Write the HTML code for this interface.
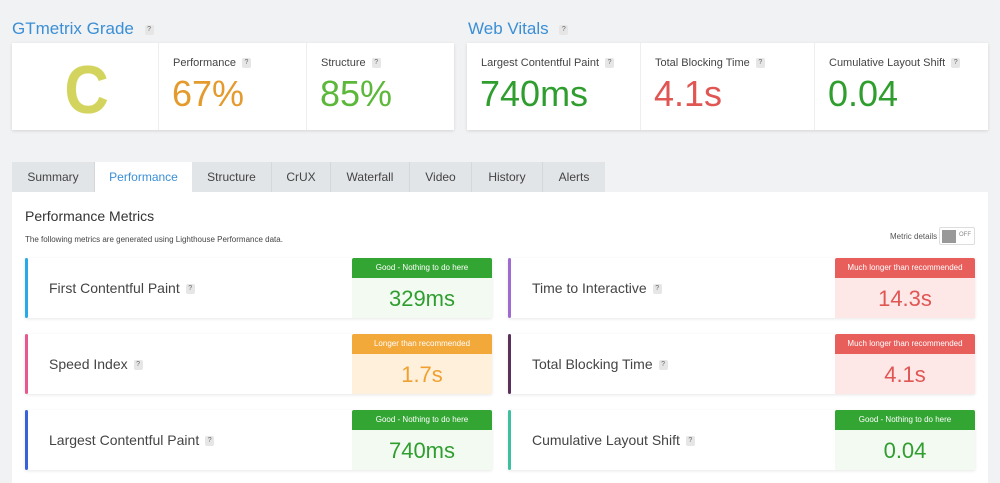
<!DOCTYPE html>
<html><head><style>
*{box-sizing:border-box;margin:0;padding:0}
body{width:1000px;height:483px;background:#f1f2f3;font-family:"Liberation Sans",sans-serif;position:relative;overflow:hidden;color:#333}
.abs{position:absolute}
h2{position:absolute;font-weight:normal;font-size:17px;color:#3a8fd6;top:19px}
.q{display:inline-block;width:9px;height:10px;background:#e6e6e6;color:#666;font-size:7px;line-height:10px;text-align:center;border-radius:2px;vertical-align:middle;margin-left:6px}
.card{position:absolute;background:#fff;box-shadow:0 1px 3px rgba(0,0,0,.12);top:43px;height:87px}
.cell{position:absolute;top:0;height:87px;border-right:1px solid #eee}
.cell .l{position:absolute;left:14px;top:14px;font-size:11px;color:#444}
.cell .v{position:absolute;left:13px;top:30px;font-size:36px}
.tab{position:absolute;top:162px;height:30px;background:#e2e5e8;border-right:1px solid #d5d8db;font-size:12px;color:#444;text-align:center;line-height:30px}
.panel{position:absolute;left:12px;top:192px;width:976px;height:291px;background:#fff}
.row{position:absolute;height:60px;background:#fff;box-shadow:0 1px 3px rgba(0,0,0,.1);border-radius:2px}
.row .bar{position:absolute;left:0;top:0;width:3px;height:60px;border-radius:2px}
.row .n{position:absolute;left:24px;top:22px;font-size:14px;color:#444}
.badge{position:absolute;right:0;top:0;width:140px;height:60px}
.badge .h{height:20px;color:#fff;font-size:8px;text-align:center;line-height:20px;border-radius:2px 2px 0 0}
.badge .bv{height:40px;text-align:center;font-size:22px;line-height:42px}
.g .h{background:#33a532}.g .bv{background:#f3faf2;color:#2f9e2f}
.o .h{background:#f3a83a}.o .bv{background:#fff0dc;color:#f0a030}
.r .h{background:#e85e5b}.r .bv{background:#fde8e7;color:#e05653}
</style></head><body>
<h2 style="left:12px">GTmetrix Grade <span class="q">?</span></h2>
<h2 style="left:468px">Web Vitals <span class="q">?</span></h2>
<div class="card" style="left:12px;width:442px">
 <div class="cell" style="left:0;width:147px"><div class="abs" style="left:50px;top:8px;font-size:68px;color:#d2d45e;font-weight:bold;transform:scaleX(.9);text-shadow:0 0 1px #e8e8a0">C</div></div>
 <div class="cell" style="left:147px;width:148px"><div class="l">Performance<span class="q">?</span></div><div class="v" style="color:#e49a2d">67%</div></div>
 <div class="cell" style="left:295px;width:147px;border:0"><div class="l">Structure<span class="q">?</span></div><div class="v" style="color:#5cb83a">85%</div></div>
</div>
<div class="card" style="left:467px;width:521px">
 <div class="cell" style="left:0;width:174px"><div class="l">Largest Contentful Paint<span class="q">?</span></div><div class="v" style="color:#2f9e2f">740ms</div></div>
 <div class="cell" style="left:174px;width:174px"><div class="l">Total Blocking Time<span class="q">?</span></div><div class="v" style="color:#e05653">4.1s</div></div>
 <div class="cell" style="left:348px;width:173px;border:0"><div class="l">Cumulative Layout Shift<span class="q">?</span></div><div class="v" style="color:#2f9e2f">0.04</div></div>
</div>
<div class="tab" style="left:12px;width:83px">Summary</div>
<div class="tab" style="left:95px;width:97px;background:#fff;color:#3a8fd6;border:0">Performance</div>
<div class="tab" style="left:192px;width:80px">Structure</div>
<div class="tab" style="left:272px;width:59px">CrUX</div>
<div class="tab" style="left:331px;width:79px">Waterfall</div>
<div class="tab" style="left:410px;width:62px">Video</div>
<div class="tab" style="left:472px;width:71px">History</div>
<div class="tab" style="left:543px;width:62px;border:0">Alerts</div>
<div class="panel"></div>
<div class="abs" style="left:25px;top:208px;font-size:14px;color:#333">Performance Metrics</div>
<div class="abs" style="left:25px;top:235px;font-size:8px;color:#444">The following metrics are generated using Lighthouse Performance data.</div>
<div class="abs" style="left:890px;top:232px;font-size:8px;color:#555">Metric details</div>
<div class="abs" style="left:939px;top:227px;width:36px;height:18px;border:1px solid #ddd;border-radius:2px;background:#fff"><div class="abs" style="left:2px;top:2px;width:14px;height:13px;background:#999"></div><div class="abs" style="left:19px;top:4px;font-size:6px;color:#888">OFF</div></div>

<div class="row" style="left:25px;top:258px;width:467px"><div class="bar" style="background:#2aa9e8"></div><div class="n">First Contentful Paint<span class="q">?</span></div><div class="badge g"><div class="h">Good - Nothing to do here</div><div class="bv">329ms</div></div></div>
<div class="row" style="left:25px;top:334px;width:467px"><div class="bar" style="background:#e8578e"></div><div class="n">Speed Index<span class="q">?</span></div><div class="badge o"><div class="h">Longer than recommended</div><div class="bv">1.7s</div></div></div>
<div class="row" style="left:25px;top:410px;width:467px"><div class="bar" style="background:#3a62d8"></div><div class="n">Largest Contentful Paint<span class="q">?</span></div><div class="badge g"><div class="h">Good - Nothing to do here</div><div class="bv">740ms</div></div></div>

<div class="row" style="left:508px;top:258px;width:467px"><div class="bar" style="background:#a06bd0"></div><div class="n">Time to Interactive<span class="q">?</span></div><div class="badge r"><div class="h">Much longer than recommended</div><div class="bv">14.3s</div></div></div>
<div class="row" style="left:508px;top:334px;width:467px"><div class="bar" style="background:#5a2f5a"></div><div class="n">Total Blocking Time<span class="q">?</span></div><div class="badge r"><div class="h">Much longer than recommended</div><div class="bv">4.1s</div></div></div>
<div class="row" style="left:508px;top:410px;width:467px"><div class="bar" style="background:#3cc0a0"></div><div class="n">Cumulative Layout Shift<span class="q">?</span></div><div class="badge g"><div class="h">Good - Nothing to do here</div><div class="bv">0.04</div></div></div>
</body></html>
